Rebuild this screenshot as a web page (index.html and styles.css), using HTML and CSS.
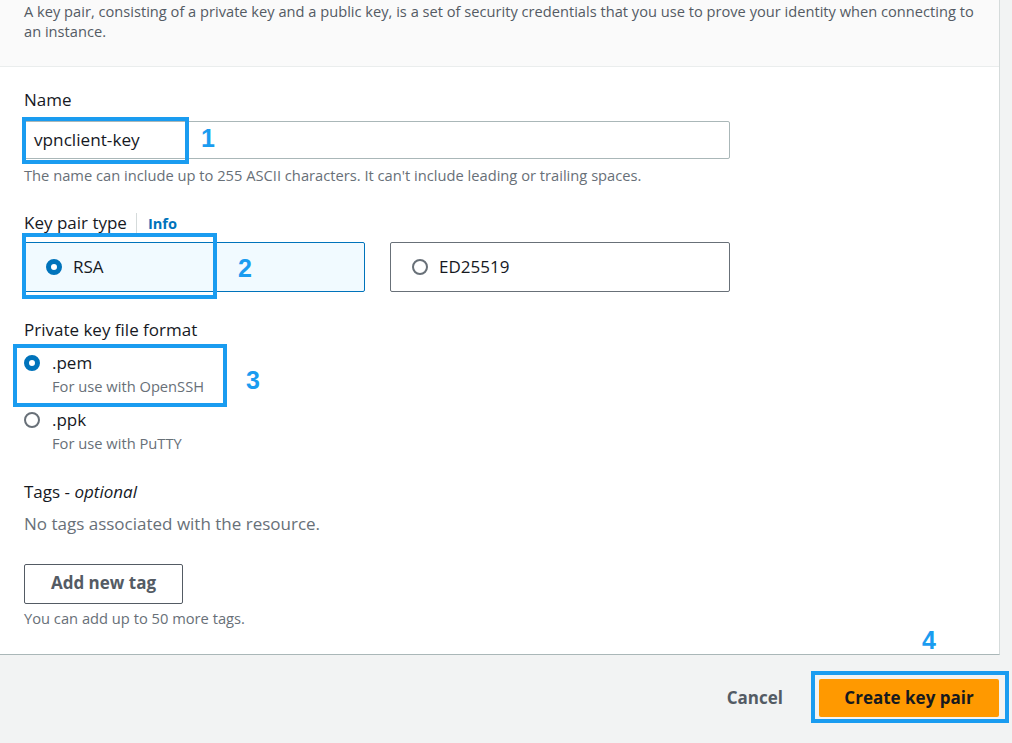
FILE: index.html
```html
<!DOCTYPE html>
<html lang="en">
<head>
<meta charset="utf-8">
<title>Create key pair</title>
<link rel="stylesheet" href="styles.css">
</head>
<body>
<div class="page">
  <div class="card">
    <div class="card-header">
      <p class="desc">A key pair, consisting of a private key and a public key, is a set of security credentials that you use to prove your identity when connecting to an instance.</p>
    </div>
    <div class="card-body">
      <div class="label">Name</div>
      <div class="input">vpnclient-key</div>
      <div class="hint">The name can include up to 255 ASCII characters. It can't include leading or trailing spaces.</div>

      <div class="label label-type">Key pair type <span class="sep"></span><span class="info">Info</span></div>
      <div class="tiles">
        <div class="tile selected"><span class="radio on"></span><span>RSA</span></div>
        <div class="tile"><span class="radio"></span><span>ED25519</span></div>
      </div>

      <div class="label label-format">Private key file format</div>
      <div class="opt opt-pem">
        <div class="opt-row"><span class="radio on"></span><span>.pem</span></div>
        <div class="opt-sub">For use with OpenSSH</div>
      </div>
      <div class="opt opt-ppk">
        <div class="opt-row"><span class="radio"></span><span>.ppk</span></div>
        <div class="opt-sub">For use with PuTTY</div>
      </div>

      <div class="label label-tags">Tags - <em>optional</em></div>
      <div class="notags">No tags associated with the resource.</div>
      <button class="btn-add">Add new tag</button>
      <div class="hint hint-tags">You can add up to 50 more tags.</div>
    </div>
  </div>
  <div class="footer">
    <button class="btn-cancel">Cancel</button>
    <button class="btn-primary">Create key pair</button>
  </div>

  <div class="mark mark1"></div>
  <div class="num num1">1</div>
  <div class="mark mark2"></div>
  <div class="num num2">2</div>
  <div class="mark mark3"></div>
  <div class="num num3">3</div>
  <div class="num num4">4</div>
  <div class="mark mark4"></div>
</div>
</body>
</html>
```
FILE: styles.css
```css
* { box-sizing: border-box; }
html, body { margin: 0; padding: 0; }
body {
  background: #f2f3f3;
  font-family: "Open Sans", "Noto Sans", sans-serif;
  color: #16191f;
  width: 1012px;
  height: 743px;
  overflow: hidden;
}
.page { position: relative; width: 1012px; height: 743px; }

.card {
  width: 1000px;
  background: #ffffff;
  border-right: 1px solid #d5dbdb;
  border-bottom: 1px solid #aab7b8;
}
.card-header {
  background: #fafafa;
  border-bottom: 1px solid #eaeded;
  padding: 1px 24px 25px 24px;
}
.desc {
  margin: 0;
  font-size: 14.65px;
  line-height: 20px;
  color: #545b64;
}
.card-body {
  padding: 22px 24px 26px 24px;
}
.label {
  font-size: 17px;
  line-height: 22px;
  color: #16191f;
}
.input {
  margin-top: 10px;
  width: 706px;
  height: 38px;
  border: 1px solid #aab7b8;
  border-radius: 2px;
  font-size: 17.2px;
  line-height: 36px;
  padding-left: 9px;
  color: #16191f;
}
.hint {
  margin-top: 6px;
  font-size: 14.7px;
  line-height: 20px;
  color: #687078;
}
.label-type { margin-top: 27px; display: flex; align-items: center; }
.sep {
  display: inline-block;
  width: 1px;
  height: 20px;
  background: #d5dbdb;
  margin: 0 11px 0 9px;
}
.info {
  font-size: 14.6px;
  font-weight: 700;
  color: #0073bb;
}
.tiles {
  margin-top: 8px;
  width: 706px;
  display: grid;
  grid-template-columns: 341px 340px;
  gap: 25px;
}
.tile {
  height: 50px;
  border: 1px solid #687078;
  border-radius: 2px;
  display: flex;
  align-items: center;
  gap: 11px;
  padding-left: 21px;
  padding-bottom: 1px;
  font-size: 17px;
  color: #16191f;
}
.tile.selected {
  background: #f1faff;
  border-color: #0073bb;
}
.radio {
  display: inline-block;
  flex: none;
  width: 16px;
  height: 16px;
  border-radius: 50%;
  border: 2px solid #687078;
  background: #fff;
}
.radio.on {
  border: 5px solid #0073bb;
}
.label-format { margin-top: 27px; }
.opt-pem { margin-top: 11px; }
.opt-ppk { margin-top: 13px; }
.opt-row {
  display: flex;
  align-items: center;
  gap: 12px;
  font-size: 17px;
  line-height: 22px;
}
.opt-sub {
  margin-top: 2px;
  padding-left: 28px;
  font-size: 14.7px;
  line-height: 20px;
  color: #687078;
}
.label-tags { margin-top: 28px; }
.label-tags em { font-style: italic; }
.notags {
  margin-top: 10px;
  font-size: 17px;
  line-height: 22px;
  color: #687078;
}
.btn-add {
  margin-top: 29px;
  display: block;
  width: 159px;
  height: 40px;
  background: #fff;
  border: 1px solid #545b64;
  border-radius: 2px;
  font-family: inherit;
  font-size: 17px;
  line-height: 36px;
  font-weight: 700;
  color: #545b64;
  padding: 0 0 2px 0;
}
.hint-tags { margin-top: 4px; }

.footer {
  display: flex;
  justify-content: flex-end;
  align-items: center;
  gap: 16px;
  padding: 24px 13px 0 0;
}
.btn-cancel {
  background: transparent;
  border: none;
  font-family: inherit;
  font-size: 17px;
  line-height: 37px;
  font-weight: 700;
  color: #545b64;
  padding: 0 20px 1px 20px;
  height: 38px;
}
.btn-primary {
  width: 180px;
  height: 38px;
  background: #ff9900;
  border: none;
  border-radius: 2px;
  font-family: inherit;
  font-size: 17px;
  line-height: 37px;
  font-weight: 700;
  color: #16191f;
  padding: 0 0 1px 0;
}

/* annotation overlays */
.mark {
  position: absolute;
  border: 4px solid #1a9cf0;
}
.mark1 { left: 22px; top: 117px; width: 167px; height: 47px; }
.mark2 { left: 22px; top: 233px; width: 195px; height: 66px; }
.mark3 { left: 13px; top: 344px; width: 214px; height: 63px; }
.mark4 { left: 811px; top: 671px; width: 198px; height: 52px; }
.num {
  position: absolute;
  font-family: "Liberation Sans", Arial, sans-serif;
  font-weight: 700;
  font-size: 25px;
  line-height: 30px;
  color: #1a9cf0;
}
.num1 { left: 201px; top: 123px; }
.num2 { left: 238px; top: 253px; }
.num3 { left: 246px; top: 365px; }
.num4 { left: 922px; top: 625px; }
```
